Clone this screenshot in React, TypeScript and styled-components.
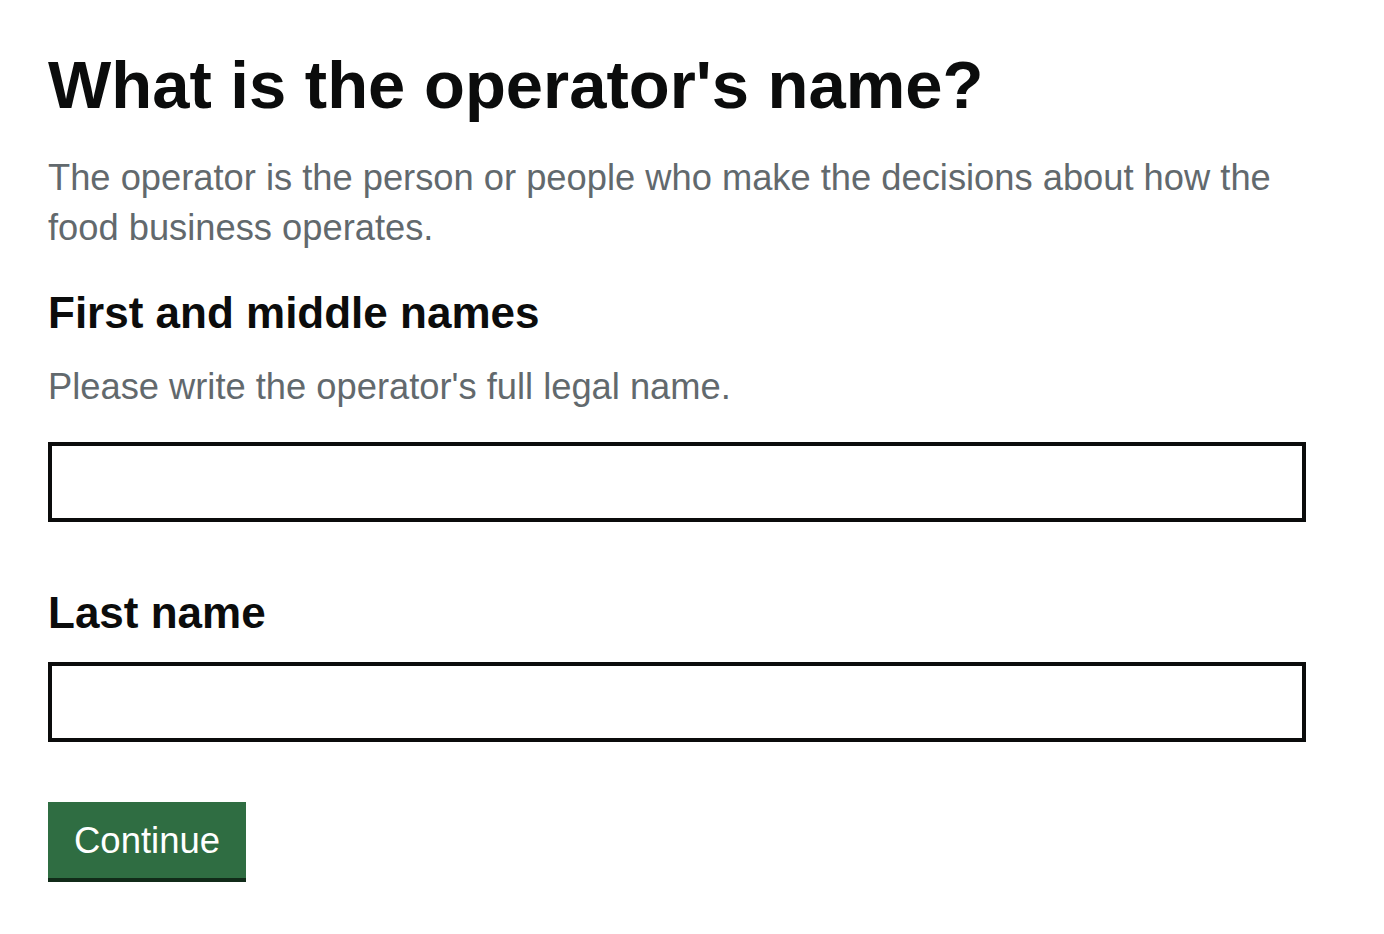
import React from "react";
import styled, { createGlobalStyle } from "styled-components";

const GlobalStyle = createGlobalStyle`
  html, body { margin: 0; padding: 0; background: #ffffff; }
  body { font-family: "Liberation Sans", Arial, sans-serif; color: #0b0c0c; }
  * { box-sizing: border-box; }
`;

const Page = styled.main`
  padding: 45px 0 0 48px;
  width: 1306px;
`;

const Heading = styled.h1`
  margin: 0;
  font-size: 67px;
  line-height: 80px;
  font-weight: 700;
  color: #0b0c0c;
`;

const Hint = styled.p<{ $top: number }>`
  margin: ${(p) => p.$top}px 0 0;
  font-size: 36.3px;
  line-height: 50px;
  font-weight: 400;
  color: #62696d;
`;

const Field = styled.div<{ $top: number }>`
  display: flex;
  flex-direction: column;
  margin-top: ${(p) => p.$top}px;
`;

const Label = styled.label`
  font-size: 44px;
  line-height: 50px;
  font-weight: 700;
  color: #0b0c0c;
`;

const Input = styled.input<{ $top: number }>`
  margin-top: ${(p) => p.$top}px;
  width: 1258px;
  height: 80px;
  border: 4px solid #0b0c0c;
  border-radius: 0;
  padding: 10px;
  font: inherit;
  font-size: 36px;
  background: #fff;
  outline: none;
`;

const Button = styled.button`
  margin-top: 60px;
  align-self: flex-start;
  height: 80px;
  padding: 14px 26px 12px;
  border: 0;
  border-bottom: 4px solid #112b19;
  border-radius: 0;
  background: #2f6d42;
  color: #ffffff;
  font-family: "Liberation Sans", Arial, sans-serif;
  font-size: 36.5px;
  line-height: 50px;
  font-weight: 400;
  cursor: pointer;
`;

const Form = styled.form`
  display: flex;
  flex-direction: column;
`;

export default function App() {
  return (
    <>
      <GlobalStyle />
      <Page>
        <Heading>What is the operator's name?</Heading>
        <Hint $top={28}>
          The operator is the person or people who make the decisions about how the food
          business operates.
        </Hint>
        <Form onSubmit={(e) => e.preventDefault()}>
          <Field $top={35}>
            <Label htmlFor="first">First and middle names</Label>
            <Hint $top={24}>Please write the operator's full legal name.</Hint>
            <Input id="first" type="text" $top={30} />
          </Field>
          <Field $top={66}>
            <Label htmlFor="last">Last name</Label>
            <Input id="last" type="text" $top={24} />
          </Field>
          <Button type="submit">Continue</Button>
        </Form>
      </Page>
    </>
  );
}
